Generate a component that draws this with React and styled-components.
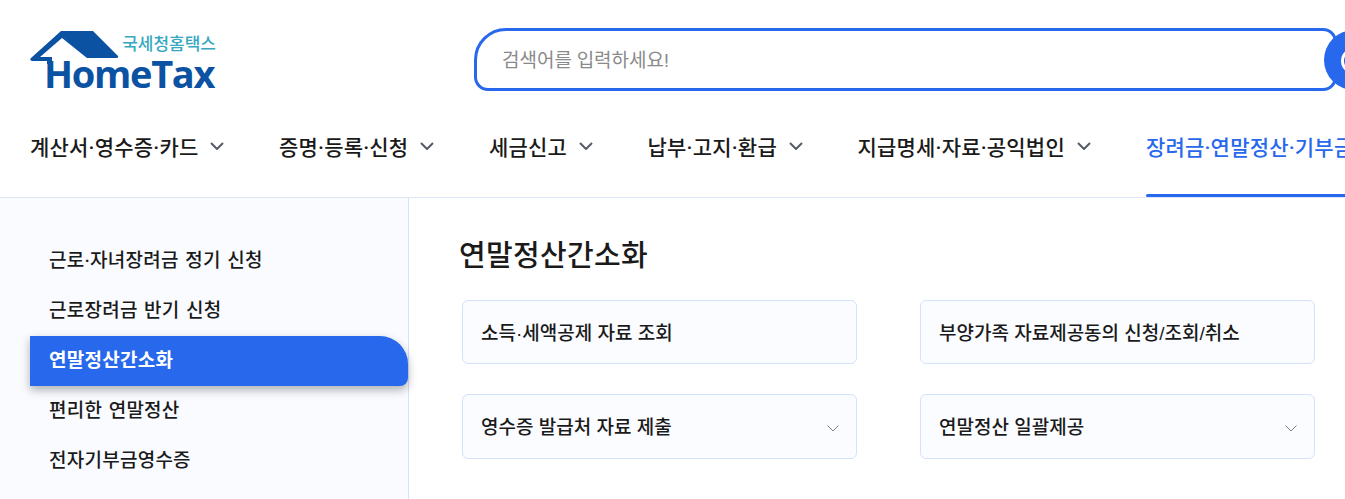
import styled, { createGlobalStyle } from "styled-components"

const GlobalStyle = createGlobalStyle`
  html, body {
    margin: 0;
    padding: 0;
    background: #fff;
    overflow: hidden;
  }
  * {
    box-sizing: border-box;
  }
  body {
    font-family: Roboto, "Noto Sans CJK KR", sans-serif;
    color: #1a1a1a;
  }
`

const Page = styled.div`
  width: 1345px;
  height: 499px;
  overflow: hidden;
`

const Header = styled.header`
  height: 198px;
  border-bottom: 1px solid #dde6f5;
  padding-left: 30px;
`

const TopRow = styled.div`
  display: flex;
  align-items: flex-start;
  height: 106px;
  padding-top: 28px;
`

const Logo = styled.div`
  position: relative;
  width: 186px;
  height: 63px;
  margin-right: 258px;
`

const LogoKr = styled.span`
  position: absolute;
  top: 8px;
  right: 0;
  font-size: 17px;
  line-height: 16px;
  font-weight: 500;
  letter-spacing: 0;
  white-space: nowrap;
  color: #37a8c0;
`

const LogoName = styled.span`
  position: absolute;
  left: 14px;
  bottom: 2px;
  font-family: "Open Sans", sans-serif;
  font-size: 38px;
  line-height: 32px;
  font-weight: 700;
  letter-spacing: -1.3px;
  color: #0b52a3;
`

const Search = styled.div`
  position: relative;
  width: 863px;
  height: 63px;
  border: 3px solid #2768ec;
  border-radius: 32px 14px 14px 14px;
  display: flex;
  align-items: center;
  padding: 0 0 2px 25px;
  font-size: 19px;
  color: #8a8a8a;
  letter-spacing: 0;
`

const SearchButton = styled.div`
  position: absolute;
  top: -1px;
  left: 847px;
  width: 60px;
  height: 60px;
  border-radius: 50%;
  background: #2768ec;
  &:after {
    content: "";
    position: absolute;
    left: 17px;
    top: 18px;
    width: 20px;
    height: 20px;
    border-radius: 50%;
    border: 3px solid #fff;
  }
`

const Nav = styled.nav`
  display: flex;
  align-items: center;
  height: 91px;
  padding-bottom: 11px;
  white-space: nowrap;
`

const NavItem = styled.div`
  position: relative;
  display: flex;
  align-items: center;
  gap: 12px;
  height: 100%;
  margin-right: ${({ $gap }) => $gap}px;
  font-size: 21px;
  font-weight: 500;
  letter-spacing: 0.2px;
  color: ${({ $active }) => ($active ? "#2768ec" : "#1a1a1a")};
  ${({ $active }) =>
    $active &&
    `&:after {
      content: "";
      position: absolute;
      left: 0;
      right: 0;
      bottom: -11px;
      height: 3px;
      border-radius: 2px 0 0 2px;
      background: #2768ec;
    }`}
`

const Chevron = styled.svg`
  flex-shrink: 0;
  fill: none;
  stroke: ${({ $color }) => $color};
  stroke-width: ${({ $weight }) => $weight};
`

const Body = styled.div`
  display: flex;
  height: 301px;
`

const Side = styled.aside`
  width: 409px;
  flex-shrink: 0;
  background: #f9fbff;
  border-right: 1px solid #d5e2fb;
  padding: 38px 0 0 30px;
`

const SideItem = styled.div`
  display: flex;
  align-items: center;
  height: 50px;
  padding: 0 0 6px 19px;
  font-size: 19px;
  font-weight: ${({ $active }) => ($active ? 700 : 500)};
  letter-spacing: 0.25px;
  word-spacing: 1.5px;
  color: ${({ $active }) => ($active ? "#fff" : "#1a1a1a")};
  ${({ $active }) =>
    $active &&
    `background: #2768ec;
     border-radius: 0 28px 8px 0;
     box-shadow: 0 4px 10px rgba(0, 0, 0, 0.3);`}
`

const Content = styled.main`
  flex: 1;
  padding: 38px 30px 0 50px;
`

const Title = styled.h2`
  margin: 0 0 23px;
  font-size: 29px;
  line-height: 41px;
  font-weight: 500;
  letter-spacing: 0.3px;
  color: #1a1a1a;
`

const CardGrid = styled.div`
  display: grid;
  grid-template-columns: 395px 395px;
  grid-template-rows: 64px 65px;
  column-gap: 63px;
  row-gap: 30px;
  margin-left: 3px;
`

const Card = styled.div`
  display: flex;
  align-items: center;
  justify-content: space-between;
  padding: 0 17px 2px 18px;
  background: #fbfcff;
  border: 1px solid #d5e2fb;
  border-radius: 6px;
  font-family: "Liberation Sans", "Noto Sans CJK KR", sans-serif;
  font-size: 19px;
  font-weight: 500;
  letter-spacing: 0;
  color: #1a1a1a;
  svg {
    margin-top: 6px;
  }
`

const NAV_ITEMS = [
  { name: "계산서·영수증·카드", gap: 54.5 },
  { name: "증명·등록·신청", gap: 54.5 },
  { name: "세금신고", gap: 54.5 },
  { name: "납부·고지·환급", gap: 54.5 },
  { name: "지급명세·자료·공익법인", gap: 55 },
]

const SIDE_ITEMS = [
  "근로·자녀장려금 정기 신청",
  "근로장려금 반기 신청",
  "연말정산간소화",
  "편리한 연말정산",
  "전자기부금영수증",
]

const CARDS = [
  { name: "소득·세액공제 자료 조회" },
  { name: "부양가족 자료제공동의 신청/조회/취소" },
  { name: "영수증 발급처 자료 제출", more: true },
  { name: "연말정산 일괄제공", more: true },
]

function HouseMark() {
  return (
    <svg
      width="90"
      height="38"
      viewBox="0 0 90 38"
      style={{ position: "absolute", left: 0, top: 0 }}
    >
      <path
        d="M31 3 L63 3 L88 28 Q89 30 86 30 L57 30 L32 10 L10 29 L22 29 L22 36 L17 36 L17 33 L2 33 Q-1 32 1 30 Z"
        fill="#0b52a3"
      />
    </svg>
  )
}

export default function App() {
  return (
    <Page>
      <GlobalStyle />
      <Header>
        <TopRow>
          <Logo>
            <HouseMark />
            <LogoKr>국세청홈택스</LogoKr>
            <LogoName>HomeTax</LogoName>
          </Logo>
          <Search>
            검색어를 입력하세요!
            <SearchButton />
          </Search>
        </TopRow>
        <Nav>
          {NAV_ITEMS.map((item) => (
            <NavItem key={item.name} $gap={item.gap}>
              {item.name}
              <Chevron width="14" height="8" viewBox="0 0 14 8" $color="#555a66" $weight={2}>
                <path d="M1 1 L7 7 L13 1" />
              </Chevron>
            </NavItem>
          ))}
          <NavItem $active $gap={0}>
            장려금·연말정산·기부금
          </NavItem>
        </Nav>
      </Header>
      <Body>
        <Side>
          {SIDE_ITEMS.map((name) => (
            <SideItem key={name} $active={name === "연말정산간소화"}>
              {name}
            </SideItem>
          ))}
        </Side>
        <Content>
          <Title>연말정산간소화</Title>
          <CardGrid>
            {CARDS.map((card) => (
              <Card key={card.name}>
                {card.name}
                {card.more && (
                  <Chevron width="12" height="7" viewBox="0 0 12 7" $color="#7d7d85" $weight={1}>
                    <path d="M0.5 0.5 L6 6 L11.5 0.5" />
                  </Chevron>
                )}
              </Card>
            ))}
          </CardGrid>
        </Content>
      </Body>
    </Page>
  )
}
